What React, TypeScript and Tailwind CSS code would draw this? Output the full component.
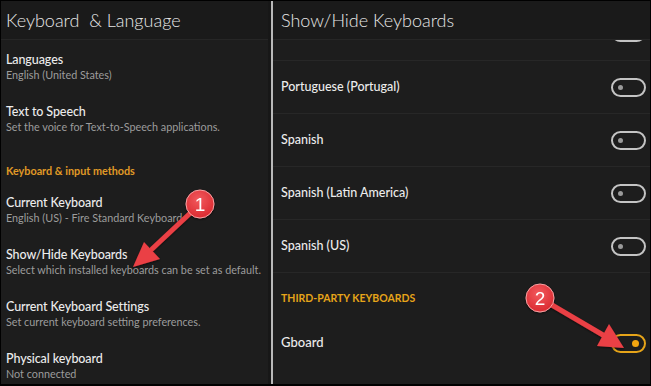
import React from "react";

type LeftItem = { title: string; subtitle: string };

const topItems: LeftItem[] = [
  { title: "Languages", subtitle: "English (United States)" },
  { title: "Text to Speech", subtitle: "Set the voice for Text-to-Speech applications." },
];

const inputItems: LeftItem[] = [
  { title: "Current Keyboard", subtitle: "English (US) - Fire Standard Keyboard" },
  { title: "Show/Hide Keyboards", subtitle: "Select which installed keyboards can be set as default." },
  { title: "Current Keyboard Settings", subtitle: "Set current keyboard setting preferences." },
  { title: "Physical keyboard", subtitle: "Not connected" },
];

const keyboards = ["Portuguese (Portugal)", "Spanish", "Spanish (Latin America)", "Spanish (US)"];

function SettingItem({ item }: { item: LeftItem }) {
  return (
    <div className="flex h-[29px] flex-col">
      <span className="text-[12.5px] font-medium leading-[16px] tracking-[-0.1px] text-[#ececec]">{item.title}</span>
      <span className="text-[10.8px] leading-[13px] whitespace-nowrap text-[#9c9c9c]">{item.subtitle}</span>
    </div>
  );
}

function Toggle({ on }: { on?: boolean }) {
  return (
    <div
      className={
        on
          ? "flex h-[19px] w-[35px] items-center justify-end rounded-full border-2 border-[#e6a419] pr-[5px]"
          : "flex h-[19px] w-[35px] items-center rounded-full border-2 border-[#c4c4c4] pl-[5px]"
      }
    >
      <span className={on ? "h-[7px] w-[7px] rounded-full bg-[#f2a510]" : "h-[5px] w-[5px] rounded-full bg-[#9a9a9a]"} />
    </div>
  );
}

function Annotations() {
  return (
    <svg className="pointer-events-none absolute left-0 top-0" width={651} height={386} viewBox="0 0 651 386">
      <defs>
        <radialGradient id="badge" cx="0.45" cy="0.35" r="0.7">
          <stop offset="0" stopColor="#f25a5e" />
          <stop offset="1" stopColor="#d9262d" />
        </radialGradient>
        <filter id="shadow" x="-20%" y="-20%" width="140%" height="140%">
          <feDropShadow dx="0" dy="1" stdDeviation="1.2" floodColor="#000" floodOpacity="0.6" />
        </filter>
      </defs>
      <g filter="url(#shadow)">
        <line x1={200} y1={204} x2={152} y2={249} stroke="#ea3f44" strokeWidth={5} strokeLinecap="round" />
        <polygon points="133,267 160,259 144,242" fill="#ea3f44" />
        <circle cx={200} cy={204} r={14} fill="url(#badge)" stroke="#f7a0a2" strokeWidth={1} />
        <text x={200} y={210.5} textAnchor="middle" fontSize={19} fill="#fff" fontFamily="'Liberation Sans', sans-serif">
          1
        </text>
      </g>
      <g filter="url(#shadow)">
        <line x1={540} y1={298} x2={603} y2={335} stroke="#ea3f44" strokeWidth={5} strokeLinecap="round" />
        <polygon points="624,348 597,346 609,324" fill="#ea3f44" />
        <circle cx={540} cy={298} r={14} fill="url(#badge)" stroke="#f7a0a2" strokeWidth={1} />
        <text x={540} y={304.5} textAnchor="middle" fontSize={19} fill="#fff" fontFamily="'Liberation Sans', sans-serif">
          2
        </text>
      </g>
    </svg>
  );
}

export default function App() {
  return (
    <div className="relative h-[386px] w-[651px] bg-black px-px pb-[2px] pt-px font-['Lato',sans-serif]">
      <div className="flex h-full bg-[#1d1d1d]">
        <div className="flex w-[267px] flex-col">
          <div className="flex h-[39px] items-center border-b border-[#262626] bg-[#1a1a1a] px-[5px]">
            <span className="text-[18px] font-light text-[#e6e6e6]">Keyboard &nbsp;&amp; Language</span>
          </div>
          <div className="flex flex-col px-[5px] pt-[12px]">
            <div className="flex flex-col gap-[23px]">
              {topItems.map((item) => (
                <SettingItem key={item.title} item={item} />
              ))}
            </div>
            <div className="mt-[31px] text-[10.8px] font-bold leading-[14px] text-[#e09a26]">Keyboard &amp; input methods</div>
            <div className="mt-[17px] flex flex-col gap-[23px]">
              {inputItems.map((item) => (
                <SettingItem key={item.title} item={item} />
              ))}
            </div>
          </div>
        </div>
        <div className="w-[3px] bg-[#171717]" />
        <div className="w-[2px] bg-[#b9b9b9]" />
        <div className="flex flex-1 flex-col">
          <div className="flex h-[39px] items-center border-b border-[#262626] bg-[#1a1a1a] px-[8px]">
            <span className="text-[18px] font-light text-[#e6e6e6]">Show/Hide Keyboards</span>
          </div>
          <div className="flex h-[21px] justify-end overflow-hidden border-b border-[#272727] pr-[4px]">
            <div className="-mt-[17px]">
              <Toggle />
            </div>
          </div>
          {keyboards.map((name) => (
            <div key={name} className="flex h-[53px] items-center justify-between border-b border-[#272727] pl-[8px] pr-[4px]">
              <span className="text-[12.5px] font-medium text-[#ececec]">{name}</span>
              <Toggle />
            </div>
          ))}
          <div className="pl-[8px] pt-[18px] text-[10.5px] font-bold leading-[14px] text-[#e6a419]">THIRD-PARTY KEYBOARDS</div>
          <div className="flex h-[76px] items-center justify-between pl-[8px] pr-[4px]">
            <span className="text-[13px] font-medium text-[#ececec]">Gboard</span>
            <Toggle on />
          </div>
        </div>
      </div>
      <Annotations />
    </div>
  );
}
